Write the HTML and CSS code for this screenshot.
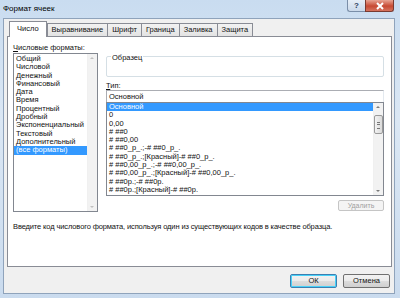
FILE: index.html
```html
<!DOCTYPE html>
<html>
<head>
<meta charset="utf-8">
<link rel="stylesheet" href="styles.css">
</head>
<body>
<div class="window">
  <div class="titlebar">
    <span class="title">Формат ячеек</span>
    <div class="caption-btns">
      <div class="cbtn help">?</div>
      <div class="cbtn close"><svg width="10" height="8" viewBox="0 0 10 8"><path d="M2 1 L8 7 M8 1 L2 7" stroke="#fff" stroke-width="2"/></svg></div>
    </div>
  </div>
  <div class="client">
    <div class="tabs">
      <div class="tab active">Число</div>
      <div class="tab">Выравнивание</div>
      <div class="tab">Шрифт</div>
      <div class="tab">Граница</div>
      <div class="tab">Заливка</div>
      <div class="tab">Защита</div>
    </div>
    <div class="page">
      <div class="cols">
        <div class="leftcol">
          <div class="label"><u>Ч</u>исловые форматы:</div>
          <div class="listbox catlist">
            <div class="items">
              <div class="item">Общий</div>
              <div class="item">Числовой</div>
              <div class="item">Денежный</div>
              <div class="item">Финансовый</div>
              <div class="item">Дата</div>
              <div class="item">Время</div>
              <div class="item">Процентный</div>
              <div class="item">Дробный</div>
              <div class="item">Экспоненциальный</div>
              <div class="item">Текстовый</div>
              <div class="item">Дополнительный</div>
              <div class="item sel">(все форматы)</div>
            </div>
            <div class="vscroll disabled">
              <div class="arrow up"></div>
              <div class="track"></div>
              <div class="arrow down"></div>
            </div>
          </div>
        </div>
        <div class="rightcol">
          <div class="group">
            <span class="legend">Образец</span>
          </div>
          <div class="label type-label"><u>Т</u>ип:</div>
          <div class="input">Основной</div>
          <div class="listbox codelist">
            <div class="items">
              <div class="item sel">Основной</div>
              <div class="item">0</div>
              <div class="item">0,00</div>
              <div class="item"># ##0</div>
              <div class="item"># ##0,00</div>
              <div class="item"># ##0_р_.;-# ##0_р_.</div>
              <div class="item"># ##0_р_.;[Красный]-# ##0_р_.</div>
              <div class="item"># ##0,00_р_.;-# ##0,00_р_.</div>
              <div class="item"># ##0,00_р_.;[Красный]-# ##0,00_р_.</div>
              <div class="item"># ##0р.;-# ##0р.</div>
              <div class="item"># ##0р.;[Красный]-# ##0р.</div>
            </div>
            <div class="vscroll">
              <div class="arrow up"></div>
              <div class="track"><div class="thumb"></div></div>
              <div class="arrow down"></div>
            </div>
          </div>
          <div class="delrow"><div class="btn small disabled">Удалить</div></div>
        </div>
      </div>
      <div class="desc">Введите код числового формата, используя один из существующих кодов в качестве образца.</div>
    </div>
    <div class="footer">
      <div class="btn ok">ОК</div>
      <div class="btn">Отмена</div>
    </div>
  </div>
</div>
</body>
</html>
```

FILE: styles.css
```css
* { box-sizing: border-box; }
html, body { margin: 0; padding: 0; }
body {
  width: 400px; height: 298px; overflow: hidden;
  font-family: "Liberation Sans", Arial, sans-serif;
  font-size: 7.5px; color: #111;
}
.window {
  width: 400px; height: 298px;
  background: linear-gradient(to bottom, #c9dcf0 0%, #dbe7f4 40%, #cadbee 100%);
  display: flex; flex-direction: column;
  padding: 0 5px 4px 3px;
}
.titlebar {
  height: 18px; display: flex; align-items: flex-start; justify-content: space-between;
}
.title { font-size: 8px; padding-top: 4px; color: #000; }
.caption-btns { display: flex; margin-right: 1px; }
.cbtn {
  height: 12px; border: 1px solid #7a8ea8; border-top: none;
  display: flex; align-items: center; justify-content: center;
  font-size: 8px; font-weight: bold;
}
.help { width: 18px; border-radius: 0 0 0 3px; background: linear-gradient(#e6eef7, #cbd9ea); color: #2b3f5c; border-right: none; }
.close { width: 29px; border-radius: 0 0 3px 0; background: linear-gradient(#e8a493, #c74a33 55%, #d6735e); border-color: #7a3a30; }
.client {
  flex: 1; background: #f0f0f0; border: 1px solid #8fa3bb;
  display: flex; flex-direction: column;
  padding: 0 2px 0 3px;
}
.tabs { display: flex; height: 17px; align-items: flex-end; padding-left: 2px; position: relative; z-index: 1; font-size: 7.5px; }
.tab {
  height: 13px; padding: 0 4px; border: 1px solid #898c95; border-bottom: none;
  background: linear-gradient(#f2f2f2, #e3e3e3);
  margin-left: -1px; line-height: 12px; white-space: nowrap;
}
.tab.active { height: 16px; background: #fff; margin-bottom: -1px; padding: 0 7px; line-height: 14px; margin-left: 0; margin-right: 1px; }
.page {
  height: 231px; background: #fff; border: 1px solid #898c95;
  padding: 6px 7px 0 5px;
}
.cols { display: flex; }
.leftcol { width: 86px; }
.label { height: 9px; line-height: 9px; }
.listbox {
  border: 1px solid #828790; background: #fff; display: flex; overflow: hidden;
}
.catlist { height: 159px; margin-top: 1px; }
.items { flex: 1; padding-top: 1px; min-width: 0; }
.item { height: 8.3px; line-height: 8.3px; padding-left: 2px; white-space: nowrap; }
.item.sel { background: #3399ff; color: #fff; }
.vscroll { width: 10px; display: flex; flex-direction: column; background: #f2f2f2; border-left: 1px solid #f0f0f0; }
.vscroll .arrow { height: 9px; position: relative; }
.vscroll .arrow::after {
  content: ""; position: absolute; left: 2px; border-left: 2px solid transparent; border-right: 2px solid transparent;
}
.vscroll .arrow.up::after { top: 3px; border-bottom: 2px solid #7a7a7a; }
.vscroll .arrow.down::after { top: 4px; border-top: 2px solid #7a7a7a; }
.vscroll.disabled .arrow.up::after { border-bottom-color: #c0c0c0; }
.vscroll.disabled .arrow.down::after { border-top-color: #c0c0c0; }
.vscroll .track { flex: 1; padding-top: 3px; }
.thumb {
  height: 19px; border: 1px solid #9a9a9a; border-radius: 2px;
  background: linear-gradient(to right, #f3f3f3, #dadada);
  position: relative;
}
.thumb::after {
  content: ""; position: absolute; left: 2px; top: 6px; width: 3px; height: 5px;
  border-top: 1px solid #777; border-bottom: 1px solid #777;
  background: linear-gradient(#777, #777) 0 1px / 3px 1px no-repeat;
}
.rightcol { margin-left: 8px; width: 279px; }
.group {
  height: 21px; margin-top: 13px; border: 1px solid #d5dfe5; border-radius: 2px; position: relative;
}
.legend { position: absolute; left: 4px; top: -4px; background: #fff; padding: 0 1px; line-height: 9px; }
.type-label { margin-top: 4px; }
.input {
  height: 12px; border: 1px solid #abadb3; border-right-color: #e3e9ef; border-bottom: none;
  padding-left: 2px; line-height: 11px; width: 278px;
}
.codelist { height: 94px; }
.codelist .items { padding-top: 0; }
.delrow { display: flex; justify-content: flex-end; margin-top: 4px; }
.btn {
  width: 47px; height: 14px; border: 1px solid #707070; border-radius: 2px;
  background: linear-gradient(#f2f2f2 0%, #ebebeb 50%, #dddddd 51%, #cfcfcf 100%);
  display: flex; align-items: center; justify-content: center;
}
.btn.small { width: 46px; height: 11px; font-size: 7px; }
.btn.disabled { color: #a0a0a0; border-color: #c5c5c5; background: #f4f4f4; }
.desc { margin-top: 10px; white-space: nowrap; letter-spacing: -0.12px; }
.footer { flex: 1; display: flex; justify-content: flex-end; align-items: center; gap: 6px; padding-right: 2px; padding-top: 1px; }
.btn.ok { border-color: #3c7fb1; box-shadow: inset 0 0 0 1px #48d1f8; }
```
